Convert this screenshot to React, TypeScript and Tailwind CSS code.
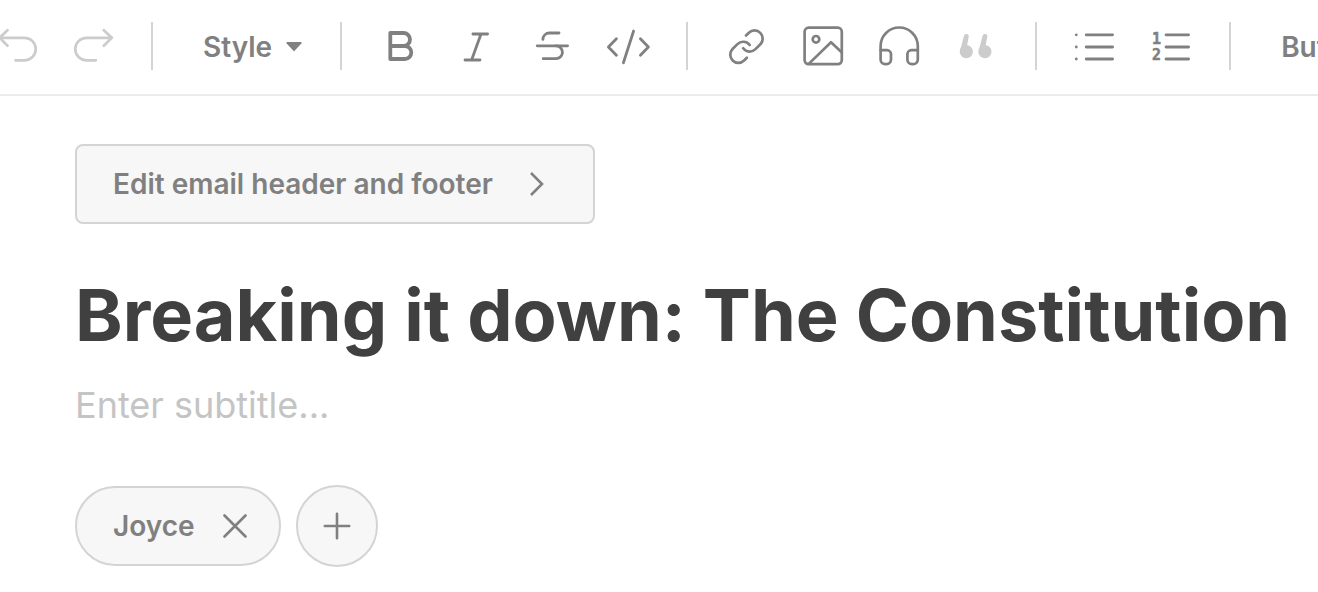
import type { ReactNode } from 'react';

type IconProps = {
  children: ReactNode;
  strokeWidth?: number;
};

const Icon = ({ children, strokeWidth = 2.7 }: IconProps) => (
  <svg
    className="size-12 shrink-0"
    viewBox="0 0 48 48"
    fill="none"
    stroke="currentColor"
    strokeWidth={strokeWidth}
    strokeLinecap="round"
    strokeLinejoin="round"
    aria-hidden="true"
  >
    {children}
  </svg>
);

const historyTools = [
  {
    label: 'Undo',
    muted: true,
    icon: (
      <Icon>
        <path d="M14.5 7.2 6.7 14.8l7.8 7.9" />
        <path d="M6.9 14.8H31.5a11.25 11.25 0 0 1 0 22.5H22.5" />
      </Icon>
    ),
  },
  {
    label: 'Redo',
    muted: true,
    icon: (
      <Icon>
        <path d="M34.8 7.2 42.8 14.8l-8 7.9" />
        <path d="M42.6 14.8H17.5a11.25 11.25 0 0 0 0 22.5H26.8" />
      </Icon>
    ),
  },
];

const textTools = [
  {
    label: 'Bold',
    icon: (
      <Icon strokeWidth={3.8}>
        <path d="M14.3 10H27.5a6.5 6.5 0 0 1 0 13H14.3zM14.3 23H28.8a6.5 6.5 0 0 1 0 13H14.3z" />
      </Icon>
    ),
  },
  {
    label: 'Italic',
    icon: (
      <Icon strokeWidth={2.8}>
        <path d="M20.9 11H35.6M13 37H28M29 11 19.6 37" />
      </Icon>
    ),
  },
  {
    label: 'Strikethrough',
    icon: (
      <Icon strokeWidth={2.8}>
        <path d="M31 10H21.3a6.4 6.4 0 0 0-6.4 6.4" />
        <path d="M9.2 22.8H39.6" />
        <path d="M28 22.8a6.4 6.4 0 0 1 0 12.9H15.2" />
      </Icon>
    ),
  },
  {
    label: 'Code',
    icon: (
      <Icon strokeWidth={2.8}>
        <path d="M12.4 15.8 4.4 24l8 8.2M36.4 15.8l8 8.2-8 8.2M29.6 8 19.4 39.8" />
      </Icon>
    ),
  },
];

const mediaTools = [
  {
    label: 'Link',
    icon: (
      <Icon strokeWidth={1.65}>
        <g transform="translate(4.9 4.1) scale(1.63)">
          <path d="M10 13a5 5 0 0 0 7.54.54l3-3a5 5 0 0 0-7.07-7.07l-1.72 1.71" />
          <path d="M14 11a5 5 0 0 0-7.54-.54l-3 3a5 5 0 0 0 7.07 7.07l1.71-1.71" />
        </g>
      </Icon>
    ),
  },
  {
    label: 'Image',
    icon: (
      <Icon>
        <rect x="5.6" y="4.7" width="37.2" height="36.4" rx="4" />
        <circle cx="17" cy="16.3" r="3.3" />
        <path d="M10 40.6 32 19.2l10.6 10" />
      </Icon>
    ),
  },
  {
    label: 'Audio',
    icon: (
      <Icon>
        <path d="M4.6 27.2V23.1a18.6 18.6 0 0 1 37.2 0V27.2" />
        <path d="M4.6 27.2H11a4 4 0 0 1 4 4V36.6a4.6 4.6 0 0 1-4.6 4.6H9.2a4.6 4.6 0 0 1-4.6-4.6z" />
        <path d="M41.8 27.2H35.4a4 4 0 0 0-4 4V36.6a4.6 4.6 0 0 0 4.6 4.6h1.2a4.6 4.6 0 0 0 4.6-4.6z" />
      </Icon>
    ),
  },
  {
    label: 'Quote',
    muted: true,
    icon: (
      <Icon strokeWidth={0}>
        <g fill="currentColor">
          <circle cx="13.3" cy="28.7" r="6.6" />
          <path d="M6.8 27.6 8.2 23.6 10.9 12.9a2.4 2.4 0 0 1 4.8 .9L13.8 24z" />
          <circle cx="31.9" cy="28.7" r="6.6" />
          <path d="M25.4 27.6 26.8 23.6 29.5 12.9a2.4 2.4 0 0 1 4.8 .9L32.4 24z" />
        </g>
      </Icon>
    ),
  },
];

const listTools = [
  {
    label: 'Bulleted list',
    icon: (
      <Icon strokeWidth={2.8}>
        <path d="M15.2 11.8H41.6M15.2 24H41.6M15.2 36H41.6" />
        <path d="M5.3 11.8h.01M5.3 24h.01M5.3 36h.01" />
      </Icon>
    ),
  },
  {
    label: 'Numbered list',
    icon: (
      <Icon strokeWidth={2.8}>
        <path d="M19 11.8H41.6M19 24H41.6M19 36H41.6" />
        <g
          className="font-['DejaVu_Sans_Mono',monospace] text-[15px] font-bold"
          fill="currentColor"
          stroke="currentColor"
          strokeWidth={0.5}
        >
          <text x="5" y="21">1</text>
          <text x="5" y="37">2</text>
        </g>
      </Icon>
    ),
  },
];

type Tool = { label: string; icon: ReactNode; muted?: boolean };

const ToolGroup = ({ tools, className = '' }: { tools: Tool[]; className?: string }) => (
  <div className={`flex shrink-0 ${className}`}>
    {tools.map((tool) => (
      <button
        key={tool.label}
        type="button"
        aria-label={tool.label}
        disabled={tool.muted}
        className="flex h-[94px] w-19 items-center justify-center text-[#808080] disabled:text-[#cccccc]"
      >
        {tool.icon}
      </button>
    ))}
  </div>
);

const Divider = () => <div className="mx-5 mb-0.5 h-12 w-0.5 shrink-0 bg-[#d4d4d4]" />;

const Toolbar = () => (
  <header className="overflow-hidden border-b-2 border-[#ebebeb]">
    <div className="-ml-[21px] flex items-center">
      <ToolGroup tools={historyTools} />
      <Divider />
      <button
        type="button"
        className="flex h-[94px] shrink-0 items-center gap-3.5 pr-[18px] pl-[30px] text-[28px] font-semibold"
      >
        Style
        <svg className="h-3 w-4" viewBox="0 0 16 12" fill="currentColor" aria-hidden="true">
          <path d="M1.2 1h13.6a.8.8 0 0 1 .6 1.4L8.8 9.6a1 1 0 0 1-1.6 0L.6 2.4A.8.8 0 0 1 1.2 1z" />
        </svg>
      </button>
      <Divider />
      <ToolGroup tools={textTools} />
      <Divider />
      <ToolGroup tools={mediaTools} className="gap-px" />
      <Divider />
      <ToolGroup tools={listTools} />
      <Divider />
      <button type="button" className="h-[94px] shrink-0 px-[30px] text-[28px] font-semibold">
        Button
      </button>
    </div>
  </header>
);

const App = () => {
  return (
    <div className="min-h-screen bg-white font-['Inter',sans-serif] text-[#808080]">
      <Toolbar />

      <main className="px-[75px] pt-12 max-lg:px-6">
        <button
          type="button"
          className="flex h-20 items-center gap-9 rounded-lg border-2 border-[#d4d4d4] bg-[#f7f7f7] pr-12 pl-9 text-[28px] font-semibold"
        >
          Edit email header and footer
          <svg
            className="h-6 w-4"
            viewBox="0 0 16 24"
            fill="none"
            stroke="currentColor"
            strokeWidth={2.6}
            aria-hidden="true"
          >
            <path d="M2 1 13 12 2 23" />
          </svg>
        </button>

        <div className="-mr-[75px] max-lg:mr-0">
          <input
            type="text"
            aria-label="Title"
            defaultValue="Breaking it down: The Constitution"
            className="mt-12 block h-[86px] w-full text-[72px] font-bold text-[#404040] outline-none"
          />
          <input
            type="text"
            aria-label="Subtitle"
            placeholder="Enter subtitle..."
            className="mt-6 block h-[46px] w-full text-[36px] outline-none placeholder:text-[#c4c4c4]"
          />
        </div>

        <div className="mt-[57px] flex items-center gap-[15px]">
          <div className="flex h-20 items-center gap-7 rounded-full border-2 border-[#d4d4d4] bg-[#f7f7f7] pr-8 pl-9 text-[28px] font-semibold">
            Joyce
            <button type="button" aria-label="Remove Joyce">
              <svg
                className="size-6"
                viewBox="0 0 24 24"
                fill="none"
                stroke="currentColor"
                strokeWidth={2.6}
                strokeLinecap="round"
                aria-hidden="true"
              >
                <path d="M1.5 1.5l21 21M22.5 1.5l-21 21" />
              </svg>
            </button>
          </div>
          <button
            type="button"
            aria-label="Add author"
            className="flex size-[82px] items-center justify-center rounded-full border-2 border-[#d4d4d4] bg-[#f7f7f7]"
          >
            <svg
              className="size-7"
              viewBox="0 0 28 28"
              fill="none"
              stroke="currentColor"
              strokeWidth={2.6}
              strokeLinecap="round"
              aria-hidden="true"
            >
              <path d="M14 1.8v24.4M1.8 14h24.4" />
            </svg>
          </button>
        </div>
      </main>
    </div>
  );
};

export default App;
